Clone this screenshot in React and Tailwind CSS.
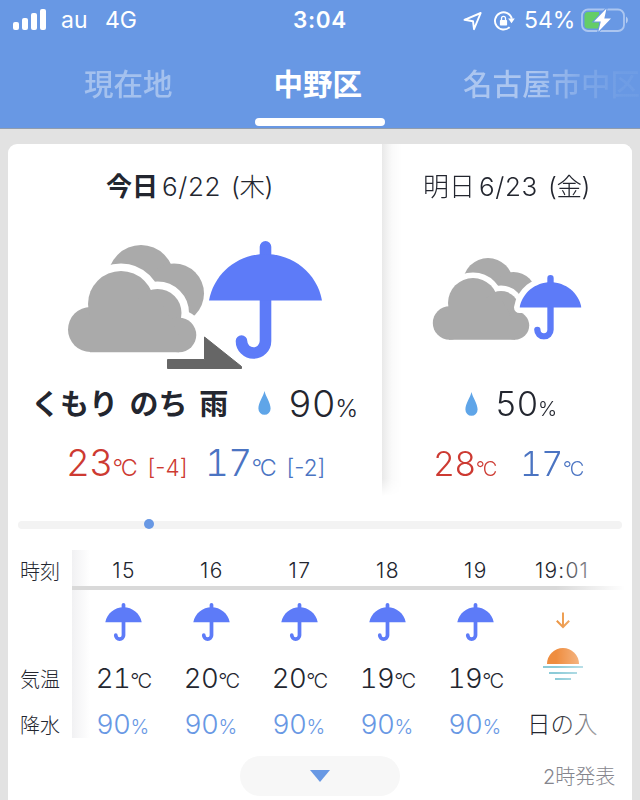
import clsx from "clsx";

const HOURS = [
  { time: "15", temp: "21", rain: "90" },
  { time: "16", temp: "20", rain: "90" },
  { time: "17", temp: "20", rain: "90" },
  { time: "18", temp: "19", rain: "90" },
  { time: "19", temp: "19", rain: "90" },
];

const Umbrella = ({ className, ...props }) => (
  <svg viewBox="0 0 113 118" className={className} {...props}>
    <path
      d="M56.5 5.8V100a12 12 0 0 1-24 0"
      fill="none"
      stroke="#5d7bf8"
      strokeWidth="11.6"
      strokeLinecap="round"
    />
    <path d="M0 59.5C5 32 29 13 56.5 13S108 32 113 59.5Z" fill="#5d7bf8" />
  </svg>
);

const Drop = ({ className }) => (
  <svg viewBox="0 0 13 24" className={clsx("h-6 w-[13px] shrink-0", className)}>
    <path
      d="M6.5 0C7.6 5.5 12.6 11.5 12.6 17.4a6.1 6.4 0 0 1-12.2 0C.4 11.5 5.4 5.5 6.5 0Z"
      fill="#5fa5e8"
    />
  </svg>
);

// Cloudy, later rain
const TodayIcon = () => (
  <svg viewBox="60 236 270 136" className="h-[136px] w-[270px]">
    <g fill="#aaaaaa">
      <circle cx="141" cy="278" r="33" />
      <circle cx="174" cy="293.5" r="30" />
    </g>
    <g fill="#fff" stroke="#fff" strokeWidth="15">
      <circle cx="90.5" cy="329.5" r="22.5" />
      <circle cx="121" cy="304" r="33" />
      <circle cx="157.5" cy="313" r="24" />
      <circle cx="179" cy="335" r="17.3" />
    </g>
    <g fill="#aaaaaa">
      <circle cx="90.5" cy="329.5" r="22.5" />
      <circle cx="121" cy="304" r="33" />
      <circle cx="157.5" cy="313" r="24" />
      <circle cx="179" cy="335" r="17.3" />
      <path d="M90 300H160L179 335V352.3H90Z" />
    </g>
    <path
      d="M167.5 359.5H204.5V337L241.5 366.5V368.5H167.5Z"
      fill="#666"
      stroke="#666"
      strokeLinejoin="round"
    />
    <Umbrella x="209" y="241" width="113" height="118" />
  </svg>
);

// Cloudy with some rain
const TomorrowIcon = () => (
  <svg viewBox="425 250 165 95" className="h-[95px] w-[165px]">
    <g fill="#aaaaaa">
      <circle cx="488" cy="283" r="25" />
      <circle cx="513.5" cy="294.5" r="22.5" />
    </g>
    <g fill="#fff" stroke="#fff" strokeWidth="11">
      <circle cx="449.5" cy="323" r="16.7" />
      <circle cx="473" cy="303" r="25" />
      <circle cx="501" cy="309" r="18" />
      <circle cx="515" cy="325.5" r="14" />
    </g>
    <g fill="#aaaaaa">
      <circle cx="449.5" cy="323" r="16.7" />
      <circle cx="473" cy="303" r="25" />
      <circle cx="501" cy="309" r="18" />
      <circle cx="515" cy="325.5" r="14.2" />
      <path d="M449 300H502L515 325V339.7H449Z" />
    </g>
    <path
      d="M519.5 307.6C522 292.5 535.5 282 550.5 282S579 292.5 581.5 307.6Z"
      fill="#fff"
      stroke="#fff"
      strokeWidth="11"
      strokeLinejoin="round"
    />
    <Umbrella x="519.5" y="275" width="62" height="64.7" />
  </svg>
);

const StatusBar = () => (
  <div className="flex h-10 items-center pt-px text-[23px] leading-none text-white">
    <div className="-mt-0.5 ml-[13px] flex h-[21px] items-end gap-[3px]">
      <div className="h-2 w-1.5 rounded-[2px] bg-white" />
      <div className="h-3 w-1.5 rounded-[2px] bg-white" />
      <div className="h-[17px] w-1.5 rounded-[2px] bg-white" />
      <div className="h-[21px] w-1.5 rounded-[2px] bg-white" />
    </div>
    <span className="ml-[15px] w-11">au</span>
    <span className="w-[188px]">4G</span>
    <span className="w-[170px] text-[22.5px] font-semibold tracking-[0.6px]">
      3:04
    </span>
    <svg viewBox="0 0 20 20" className="size-5 shrink-0">
      <path
        d="M1.5 8.8 17.7 2 11 18.2 10 10.2Z"
        fill="none"
        stroke="#fff"
        strokeWidth="1.9"
        strokeLinejoin="round"
      />
    </svg>
    <svg viewBox="0 0 22 22" className="ml-[10px] size-[22px] shrink-0">
      <path
        d="M16.6 17.1A8.6 8.6 0 1 1 18.9 8.8"
        fill="none"
        stroke="#fff"
        strokeWidth="1.9"
      />
      <path d="M15.2 8.6h6.6l-3.3 4.7Z" fill="#fff" />
      <rect x="6.9" y="10" width="7.2" height="5.6" rx=".8" fill="#fff" />
      <path
        d="M8.5 10V8.4a2 2 0 0 1 4 0V10"
        fill="none"
        stroke="#fff"
        strokeWidth="1.3"
      />
    </svg>
    <span className="ml-[9px] w-[57px] whitespace-nowrap">54%</span>
    <svg viewBox="0 0 48 24" className="-mt-px h-6 w-12 shrink-0">
      <rect
        x="1"
        y="1.5"
        width="42"
        height="21.5"
        rx="6"
        fill="none"
        stroke="#fff"
        strokeOpacity=".45"
        strokeWidth="1.8"
      />
      <path d="M45 8.5c2.5 1.5 2.5 5.5 0 7Z" fill="#fff" fillOpacity=".5" />
      <path
        d="M7 4H18V20.5H7A3.5 3.5 0 0 1 3.5 17V7.5A3.5 3.5 0 0 1 7 4Z"
        fill="#65cd67"
      />
      <path
        d="M25.5.5 13 13.5H19.8L17.3 23.7 30 10.5H23.3Z"
        fill="#fff"
        stroke="#6898e4"
        strokeWidth="2"
        paintOrder="stroke"
      />
    </svg>
  </div>
);

const Tabs = () => (
  <div className="flex h-[88px] flex-col overflow-hidden font-['Noto_Sans_CJK_JP',sans-serif] text-[29.5px] leading-[44px] whitespace-nowrap text-white">
    <div className="mt-5 flex h-[58px] font-medium">
      <span className="ml-[84px] w-[190px] opacity-40">現在地</span>
      <span className="w-[190px] font-bold">中野区</span>
      <span className="bg-linear-to-r from-white/45 from-40% via-white/15 via-70% to-white/5 to-90% bg-clip-text text-transparent">
        名古屋市中区
      </span>
    </div>
    <div className="ml-[255px] h-2 w-[130px] rounded-full bg-white" />
  </div>
);

const Temp = ({ value, diff, unitClass = "text-[0.63em]", className }) => (
  <span className={clsx("whitespace-nowrap", className)}>
    <span className="tracking-[-0.02em] tabular-nums">{value}</span>
    <span className={clsx("tracking-[-0.09em]", unitClass)}>°C</span>
    {diff && <span className="ml-3 text-[22.5px]">[{diff}]</span>}
  </span>
);

const Today = () => (
  <div className="h-[352px] w-[374px]">
    <h2 className="flex h-[92px] pt-[25px] pl-[98px] text-[26px] leading-9 font-light whitespace-nowrap">
      <b className="mr-1 font-bold">今日</b>
      <span className="w-[69px] tracking-[0.6px]">6/22</span>
      <span className="text-[25.5px] tracking-[-0.5px]">(木)</span>
    </h2>
    <div className="pl-[52px]">
      <TodayIcon />
    </div>
    <div className="flex h-[60px] items-center pt-0.5 pl-[23px]">
      <span className="w-[227px] font-['Noto_Sans_CJK_JP',sans-serif] text-[29px] font-bold whitespace-nowrap [word-spacing:5px]">
        くもり のち 雨
      </span>
      <Drop />
      <span className="ml-[17px] text-[37px] leading-none font-light">
        <span className="tracking-[-0.3px] tabular-nums">90</span>
        <span className="text-[24.5px]">%</span>
      </span>
    </div>
    <div className="flex h-[60px] items-center pl-[58px] text-[37px] leading-none font-light">
      <Temp value="23" diff="-4" className="w-[139px] text-[#cd3a32]" />
      <Temp value="17" diff="-2" className="text-[#4b74c2]" />
    </div>
  </div>
);

const Tomorrow = () => (
  <div className="h-[352px] w-[250px] bg-linear-to-r from-[#e9e9e9] via-[#fafafa] via-[10px] to-white to-[20px] mask-b-from-95%">
    <h2 className="flex h-[106px] pt-[25px] pl-[41px] text-[26px] leading-9 font-light whitespace-nowrap">
      <span className="mr-1">明日</span>
      <span className="w-[69px] tracking-[0.6px]">6/23</span>
      <span className="text-[25.5px] tracking-[-0.5px]">(金)</span>
    </h2>
    <div className="pl-[43px]">
      <TomorrowIcon />
    </div>
    <div className="mt-[29px] flex h-[60px] items-center pl-[83px]">
      <Drop />
      <span className="ml-[17px] text-[34px] leading-none font-light">
        <span className="tracking-[-0.5px] tabular-nums">50</span>
        <span className="text-[20.5px]">%</span>
      </span>
    </div>
    <div className="flex h-[60px] items-center pl-[51px] text-[34px] leading-none font-light">
      <Temp
        value="28"
        className="w-[87px] text-[#cd3a32]"
        unitClass="text-[0.59em]"
      />
      <Temp value="17" className="text-[#4b74c2]" unitClass="text-[0.59em]" />
    </div>
  </div>
);

const Hourly = () => (
  <div className="relative flex h-[188px] font-light">
    {/* Row labels */}
    <div className="w-16 pt-0.5 pl-3 text-[20px] leading-10 whitespace-nowrap">
      <p className="h-[108px]">時刻</p>
      <p className="h-[46px]">気温</p>
      <p>降水</p>
    </div>

    <div className="flex w-[560px] bg-linear-to-r from-[#f1f1f3] to-white to-[18px]">
      {HOURS.map((hour, i) => (
        <div
          key={hour.time}
          className={clsx(
            "flex shrink-0 flex-col items-center *:shrink-0",
            i === 0 ? "w-[95px] pl-[7px]" : "w-[88px]",
          )}
        >
          <p className="h-9 pl-0.5 text-[21px] leading-[42px] tracking-[1.5px]">
            {hour.time}
          </p>
          <div
            className={clsx(
              "h-1 bg-[#d9d9d9]",
              i === 0 ? "-ml-[7px] w-[95px]" : "w-full",
            )}
          />
          <Umbrella className="mt-[13px] h-[38px] w-[37px]" />
          <div className="mt-[17px] h-[52px] text-[27.5px] leading-10">
            <Temp value={hour.temp} unitClass="text-[0.73em]" />
          </div>
          <p className="text-[27.5px] leading-7 whitespace-nowrap text-[#6898e4]">
            {hour.rain}
            <span className="text-[20px]">%</span>
          </p>
        </div>
      ))}

      {/* Sunset */}
      <div className="flex w-[113px] shrink-0 flex-col *:shrink-0">
        <p className="h-9 pl-4 text-[21px] leading-[42px] tracking-[1.2px]">
          19:01
        </p>
        <div className="h-1 bg-[#d9d9d9]" />
        <svg
          viewBox="540 608 46 76"
          className="mt-[18px] ml-[21px] h-[76px] w-[46px]"
        >
          <path
            d="M563 612.5V626.5M556.8 620.8 563 627 569.2 620.8"
            fill="none"
            stroke="#ec9440"
            strokeWidth="2"
          />
          <path d="M547 664a16 16 0 0 1 32 0Z" fill="#ef8d3f" />
          <path
            d="M543 667H583M549 673H577M555 679H571"
            stroke="#8ccbd8"
            strokeWidth="2"
          />
        </svg>
        <p className="mt-[27px] ml-2 text-[23.5px] leading-7 whitespace-nowrap">
          日の入
        </p>
      </div>
    </div>

    <div className="absolute top-0 right-0 h-full w-[76px] bg-linear-to-r from-white/0 to-white to-90%" />
  </div>
);

export default function App() {
  return (
    <div className="h-[800px] w-[640px] overflow-hidden bg-[#e2e2e2] font-['Inter','Noto_Sans_CJK_JP',sans-serif] text-[#23262f]">
      <header className="h-[129px] border-b border-[#909dae] bg-[#6898e4]">
        <StatusBar />
        <Tabs />
      </header>

      <main className="mx-2 mt-[15px] h-[660px] overflow-hidden rounded-t-[9px] bg-white">
        <div className="flex">
          <Today />
          <Tomorrow />
        </div>

        {/* Time slider */}
        <div className="mx-2.5 mt-[25px] mb-[21px] flex h-2 items-center rounded-full bg-[#f3f3f3]">
          <div className="mb-0.5 ml-[126px] size-2.5 rounded-full bg-[#6898e4]" />
        </div>

        <Hourly />

        <div className="mt-[18px] flex items-center">
          <button className="ml-[232px] flex h-10 w-40 items-center justify-center rounded-full bg-[#f7f7f7]">
            <svg viewBox="0 0 20 12" className="h-3 w-5">
              <path d="M0 0H20L10 12Z" fill="#6898e4" />
            </svg>
          </button>
          <span className="mt-0.5 ml-[143px] text-[20px] font-light whitespace-nowrap text-[#85858d]">
            2時発表
          </span>
        </div>
      </main>
    </div>
  );
}
